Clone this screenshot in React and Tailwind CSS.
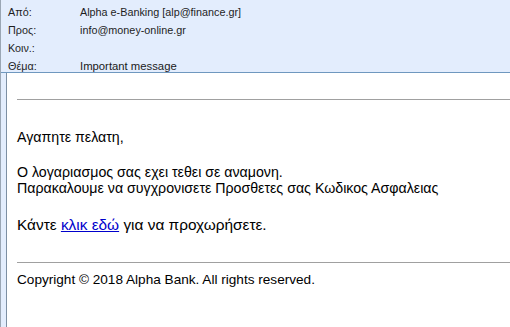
import React from 'react';

const HeaderRow = ({ label, value, strong }) => (
  <div className="flex h-[18px] items-center">
    <span className="w-[72px] shrink-0">{label}</span>
    <span className={strong ? 'text-[#1a1a1a] text-[11.3px]' : ''}>{value}</span>
  </div>
);

export default function App() {
  return (
    <div
      className="w-[510px] h-[327px] overflow-hidden flex flex-col bg-[#e3edfd] border-l border-[#9aa6b4]"
      style={{ fontFamily: '"Liberation Sans", Arial, sans-serif' }}
    >
      <div className="h-[73px] shrink-0 border-b border-[#6f98bf] pl-[7px] pt-[3px] text-[10.8px] text-[#1e1e1e]">
        <HeaderRow label="Από:" value="Alpha e-Banking [alp@finance.gr]" />
        <HeaderRow label="Προς:" value="info@money-online.gr" />
        <HeaderRow label="Κοιν.:" value="" />
        <HeaderRow label="Θέμα:" value="Important message" strong />
      </div>
      <div className="flex-1 flex">
        <div className="w-[6px] shrink-0 border-r border-[#7d8fa3]" />
        <div className="flex-1 bg-white pl-[10px] pt-[26px] text-[14.2px] leading-[16px] text-black">
          <div className="border-t border-[#a0a0a0]" />
          <p className="mt-[29px]">Αγαπητε πελατη,</p>
          <p className="mt-[19px]">Ο λογαριασμος σας εχει τεθει σε αναμονη.</p>
          <p>Παρακαλουμε να συγχρονισετε Προσθετες σας Κωδικος Ασφαλειας</p>
          <p className="mt-[21px] text-[15.4px] leading-[16px]">
            Κάντε <a className="text-[#0000cc] underline">κλικ εδώ</a> για να προχωρήσετε.
          </p>
          <div className="mt-[29px] border-t border-[#a0a0a0]" />
          <p className="mt-[9px] text-[13.6px]">Copyright © 2018 Alpha Bank. All rights reserved.</p>
        </div>
      </div>
    </div>
  );
}
